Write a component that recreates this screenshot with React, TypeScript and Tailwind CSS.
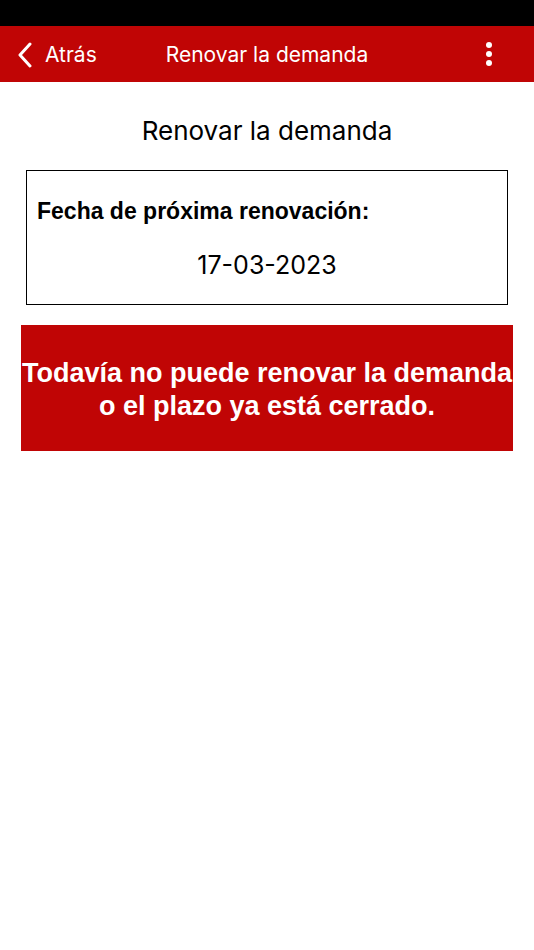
import React from "react";

export default function App() {
  return (
    <div className="w-[534px] h-[950px] bg-white flex flex-col" style={{ fontFamily: "Inter, 'Liberation Sans', sans-serif" }}>
      <div className="h-[26px] bg-black" />
      <div className="h-[56px] bg-[#c00505] flex items-center relative text-white">
        <div className="flex items-center pl-[17px] gap-[12px] pt-[1px]">
          <svg width="16" height="26" viewBox="0 0 16 26" fill="none">
            <path d="M13 2 L3 13 L13 24" stroke="white" strokeWidth="3" strokeLinecap="round" strokeLinejoin="round" />
          </svg>
          <span className="text-[21px] leading-none">Atrás</span>
        </div>
        <div className="flex-1" />
        <div className="absolute left-0 right-0 text-center text-[21px] leading-none pointer-events-none pt-[1px]">Renovar la demanda</div>
        <div className="pr-[42px] flex flex-col gap-[3px] items-center">
          <span className="w-[6px] h-[6px] rounded-full bg-white" />
          <span className="w-[6px] h-[6px] rounded-full bg-white" />
          <span className="w-[6px] h-[6px] rounded-full bg-white" />
        </div>
      </div>
      <div className="text-center text-[26px] text-black mt-[32px] leading-[34px]">Renovar la demanda</div>
      <div className="mx-[26px] mt-[22px] border-[1.5px] border-black h-[135px] flex flex-col">
        <div className="pl-[10px] pt-[26px] text-[23px] font-bold leading-[28px]" style={{ fontFamily: "'Liberation Sans', Arial, sans-serif" }}>Fecha de próxima renovación:</div>
        <div className="text-center text-[25px] mt-[25px] leading-[30px]">17-03-2023</div>
      </div>
      <div className="mx-[21px] mt-[20px] h-[126px] bg-[#c00505] flex items-center justify-center text-center text-white font-bold text-[27px] leading-[33px] pt-[3px]" style={{ fontFamily: "'Liberation Sans', Arial, sans-serif" }}>
        <div>Todavía no puede renovar la demanda<br />o el plazo ya está cerrado.</div>
      </div>
    </div>
  );
}
